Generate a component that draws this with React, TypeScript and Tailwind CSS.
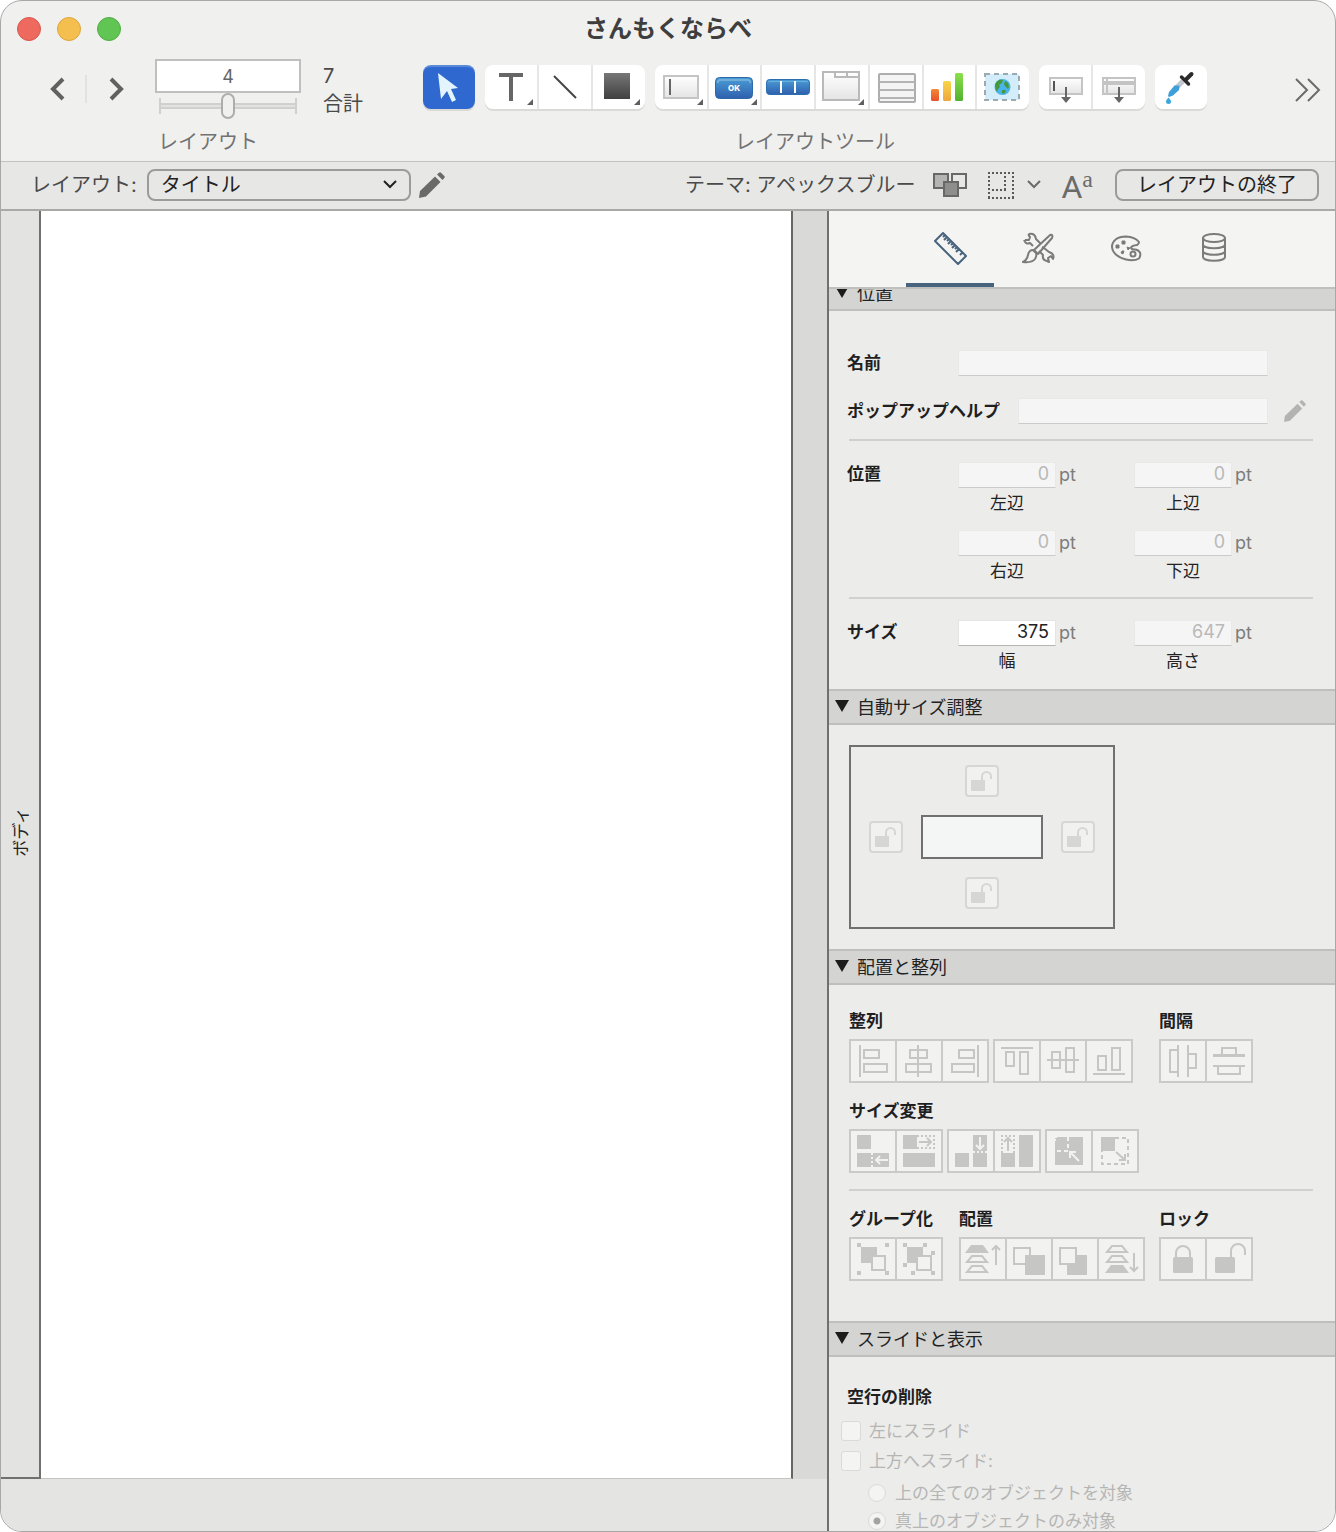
import type { ReactNode } from 'react';
import clsx from 'clsx';

/* ---------- toolbar ---------- */

function CornerMark({ x = 48 }: { x?: number }) {
  return <path d={`M${x} 34v6h-6z`} fill="#5f5f5f" />;
}

function ToolIcon({ children }: { children: ReactNode }) {
  return (
    <svg width="52" height="44" viewBox="0 0 52 44" fill="none" className="shrink-0">
      {children}
    </svg>
  );
}

function Pencil({ className }: { className: string }) {
  return (
    <svg viewBox="0 0 26 26" fill="currentColor" className={className}>
      <path d="M0 26l1-7L16 4.500 21.500 10 7 24.500z" />
      <path d="M18 2.500L20 .7q1-1 2 0l3.300 3.300q1 1 0 2L23.500 8z" />
    </svg>
  );
}

const fieldTool = (
  <ToolIcon>
    <rect x="9" y="11" width="34" height="22" fill="url(#paper)" stroke="#c4c4c4" strokeWidth="2" />
    <path d="M15 14v16" stroke="#666" strokeWidth="2" />
    <CornerMark />
  </ToolIcon>
);

const buttonTool = (
  <ToolIcon>
    <rect x="6.5" y="12.5" width="37" height="21" rx="4" fill="url(#blue)" stroke="#2d69a8" />
    <path d="M9 18v-1q0-2 2-2h28q2 0 2 2v1" stroke="#7fb5dc" strokeWidth="1.5" />
    <text x="25" y="26" textAnchor="middle" fontSize="8" fontWeight="800" fill="#fff">OK</text>
    <CornerMark />
  </ToolIcon>
);

const buttonBarTool = (
  <ToolIcon>
    <rect x="4.5" y="14.5" width="43" height="15" rx="3" fill="url(#blue)" stroke="#2c6fae" />
    <path d="M6 16.500h40" stroke="#6aaedb" />
    <path d="M19 16v12M33 16v12" stroke="#fff" strokeWidth="2" />
  </ToolIcon>
);

const tabTool = (
  <ToolIcon>
    <rect x="7" y="7" width="36" height="28" fill="url(#paper)" stroke="#b9b9b9" strokeWidth="2" />
    <path d="M19 7v5h24M31 7v5" stroke="#b9b9b9" strokeWidth="2" />
    <CornerMark />
  </ToolIcon>
);

const portalTool = (
  <ToolIcon>
    <rect x="9" y="9" width="36" height="28" rx="1" fill="#f4f4f4" stroke="#aeaeae" strokeWidth="2" />
    <path d="M9 17h36M9 25h36M9 33h36" stroke="#b4b4b4" strokeWidth="2" />
  </ToolIcon>
);

const chartTool = (
  <ToolIcon>
    <rect x="8" y="24" width="8" height="12" rx="1.500" fill="url(#barRed)" />
    <rect x="20" y="16" width="8" height="20" rx="1.500" fill="url(#barYellow)" />
    <rect x="32" y="8" width="8" height="28" rx="1.500" fill="url(#barGreen)" />
  </ToolIcon>
);

const webTool = (
  <ToolIcon>
    <rect x="8" y="9" width="34" height="26" fill="#d3edfb" stroke="#9aa9b2" strokeWidth="2" strokeDasharray="5 4" />
    <circle cx="25.500" cy="22" r="8" fill="#4bb4ea" />
    <path d="M18 20q1-4 5-5.500l3 .5-1 3-3 2 1 2-2 2-1 3q-2-3-2-7z" fill="#46993a" />
    <path d="M28 16l3 2 1 4-1 2-3-3-1-2zM25 25h3l1 1-2 3-2-1z" fill="#46993a" />
  </ToolIcon>
);

const insertFieldTool = (
  <ToolIcon>
    <rect x="11" y="13" width="32" height="16" fill="url(#paper)" stroke="#c4c4c4" strokeWidth="2" />
    <path d="M15 16v10" stroke="#555" strokeWidth="2" />
    <path d="M27 22v12" stroke="#666" strokeWidth="2" />
    <path d="M22 32h10l-5 6z" fill="#666" />
  </ToolIcon>
);

const insertPartTool = (
  <ToolIcon>
    <rect x="10" y="13" width="32" height="16" fill="url(#paper)" stroke="#c4c4c4" strokeWidth="2" />
    <path d="M10 18h32" stroke="#c4c4c4" strokeWidth="4" />
    <path d="M14 13v16" stroke="#c4c4c4" strokeWidth="2" />
    <path d="M26 22v12" stroke="#666" strokeWidth="2" />
    <path d="M21 32h10l-5 6z" fill="#666" />
  </ToolIcon>
);

const pointerTool = (
  <ToolIcon>
    <path d="M15 7l20 15-7 1 5 11-4 2-5-11-6 8z" fill="#e3f4fd" />
  </ToolIcon>
);

const textTool = (
  <ToolIcon>
    <path d="M14 8h24v4H28v24h-4V12H14z" fill="#666" />
    <CornerMark />
  </ToolIcon>
);

const lineTool = (
  <ToolIcon>
    <path d="M15 11l22 22" stroke="#444" strokeWidth="2" />
  </ToolIcon>
);

const shapeTool = (
  <ToolIcon>
    <rect x="11" y="8" width="26" height="26" fill="url(#dark)" />
    <CornerMark x={47} />
  </ToolIcon>
);

const dropperTool = (
  <ToolIcon>
    <path d="M28 16L20 24" stroke="#c3c7ce" strokeWidth="5" />
    <path d="M24.500 20.500h-5L14 27l-1 4 1 1 4-1.500 6-5.500z" fill="#3f9fd8" />
    <path d="M26.500 12l7 7" stroke="#2b2b2b" strokeWidth="3.500" strokeLinecap="round" />
    <path d="M31 14.500l5.500-5.500" stroke="#2b2b2b" strokeWidth="4" strokeLinecap="round" />
    <path d="M13.500 32.500q2.500 2.500 2.500 4a2.500 2.500 0 0 1-5 0q0-1.500 2.500-4z" fill="#3fa7dc" />
  </ToolIcon>
);

const toolGroups = [
  {
    width: 'w-[160px]',
    tools: [
      { label: 'テキスト', icon: textTool },
      { label: '線', icon: lineTool },
      { label: '図形', icon: shapeTool },
    ],
  },
  {
    width: 'w-[374px]',
    tools: [
      { label: 'フィールド', icon: fieldTool },
      { label: 'ボタン', icon: buttonTool },
      { label: 'ボタンバー', icon: buttonBarTool },
      { label: 'タブ', icon: tabTool },
      { label: 'ポータル', icon: portalTool },
      { label: 'グラフ', icon: chartTool },
      { label: 'Web ビューア', icon: webTool },
    ],
  },
  {
    width: 'w-[106px]',
    tools: [
      { label: 'フィールドを挿入', icon: insertFieldTool },
      { label: 'パートを挿入', icon: insertPartTool },
    ],
  },
  { width: 'w-[52px]', tools: [{ label: '書式のコピー', icon: dropperTool }] },
];

function IconGradients() {
  const stops = [
    ['paper', '#ffffff', '#e4e4e4'],
    ['blue', '#4a9ed6', '#2f5fae'],
    ['dark', '#777777', '#404040'],
    ['barRed', '#f28a34', '#e8502a'],
    ['barYellow', '#f8d648', '#f0a63c'],
    ['barGreen', '#8be04a', '#52b130'],
  ];
  return (
    <svg width="0" height="0" className="absolute" aria-hidden="true">
      <defs>
        {stops.map(([id, from, to]) => (
          <linearGradient key={id} id={id} x1="0" y1="0" x2="0" y2="1">
            <stop stopColor={from} />
            <stop offset="1" stopColor={to} />
          </linearGradient>
        ))}
      </defs>
    </svg>
  );
}

function Toolbar() {
  return (
    <div className="flex h-[105px] shrink-0 items-start pl-11 pr-3.5">
      <div className="flex h-[66px] items-center">
        <button aria-label="前へ" className="flex w-6 justify-center">
          <svg width="16" height="24" viewBox="0 0 16 24" fill="none" stroke="#616161" strokeWidth="4">
            <path d="M14 2L4 12l10 10" />
          </svg>
        </button>
        <span className="mx-4 h-7 w-0.5 bg-[#e2e2e1]" />
        <button aria-label="次へ" className="flex w-7 justify-center">
          <svg width="16" height="24" viewBox="0 0 16 24" fill="none" stroke="#616161" strokeWidth="4">
            <path d="M2 2l10 10L2 22" />
          </svg>
        </button>
      </div>

      <div className="ml-6 flex w-[146px] flex-col pt-[3px]">
        <input
          aria-label="レイアウト番号"
          defaultValue="4"
          className="h-[34px] w-full border-2 border-[#bfbfbe] bg-white text-center text-lg text-[#666] outline-none"
        />
        <div className="mx-1 grid items-center">
          <div className="col-start-1 row-start-1 flex h-4 items-center border-x-2 border-[#d0d0cf]">
            <div className="h-1.5 w-full border-y-2 border-[#d0d0cf] bg-[#e2e2e1]" />
          </div>
          <input
            type="range"
            aria-label="レイアウト"
            min={1}
            max={7}
            defaultValue={4}
            className="col-start-1 row-start-1 h-[26px] w-full appearance-none bg-transparent [&::-webkit-slider-thumb]:h-[26px] [&::-webkit-slider-thumb]:w-[14px] [&::-webkit-slider-thumb]:appearance-none [&::-webkit-slider-thumb]:rounded-full [&::-webkit-slider-thumb]:border-2 [&::-webkit-slider-thumb]:border-[#adadac] [&::-webkit-slider-thumb]:bg-[#f0f0ef]"
          />
        </div>
        <span className="mt-[9px] self-center pr-10 text-xl leading-7 text-[#737373]">レイアウト</span>
      </div>

      <div className="ml-[22px] flex w-[100px] flex-col pt-1.5 text-xl leading-7 text-[#4a4a4a]">
        <span>7</span>
        <span>合計</span>
      </div>

      <div className="flex flex-col items-center pt-[9px]">
        <div className="flex gap-2.5">
          <button
            aria-label="選択"
            className="flex h-11 w-[52px] items-center justify-center overflow-hidden rounded-lg border-t-2 border-[#5a8bd8] bg-[#2f68cf] shadow-[0_2px_0_#d9d9d8]"
          >
            {pointerTool}
          </button>
          {toolGroups.map((group) => (
            <div
              key={group.width}
              className={clsx('flex h-11 gap-0.5 overflow-hidden rounded-lg bg-[#e6e6e5] shadow-[0_2px_0_#dadad9]', group.width)}
            >
              {group.tools.map((tool) => (
                <button key={tool.label} aria-label={tool.label} className="flex min-w-0 flex-1 justify-center bg-white">
                  {tool.icon}
                </button>
              ))}
            </div>
          ))}
        </div>
        <span className="mt-[19px] text-xl leading-7 text-[#737373]">レイアウトツール</span>
      </div>

      <button aria-label="その他" className="ml-auto mt-[21px]">
        <svg width="26" height="26" viewBox="0 0 26 26" fill="none" stroke="#6b6b6b" strokeWidth="2">
          <path d="M1 2l11 11L1 24M13 2l11 11-11 11" />
        </svg>
      </button>
    </div>
  );
}

/* ---------- status bar ---------- */

function LayoutBar() {
  return (
    <div className="flex h-[49px] shrink-0 items-center border-b-2 border-[#a9a9a8] bg-[#e7e7e6] pb-0.5 pl-[30px] pr-4 text-xl text-[#4a4a4a]">
      <label htmlFor="layout" className="whitespace-nowrap">レイアウト:</label>
      <div className="ml-2.5 grid items-center">
        <select
          id="layout"
          className="col-start-1 row-start-1 h-8 w-[264px] appearance-none rounded-lg border-2 border-[#9b9b9a] bg-transparent pl-3 text-xl leading-7 text-[#222]"
        >
          <option>タイトル</option>
        </select>
        <svg width="14" height="9" viewBox="0 0 14 9" fill="none" stroke="#222" strokeWidth="2" className="pointer-events-none col-start-1 row-start-1 mr-3.5 justify-self-end">
          <path d="M1 1l6 6 6-6" />
        </svg>
      </div>
      <button aria-label="レイアウトの編集" className="ml-2">
        <Pencil className="h-[26px] w-[26px] text-[#6a6a69]" />
      </button>

      <span className="ml-auto whitespace-nowrap">テーマ: アペックスブルー</span>
      <button aria-label="テーマの変更" className="ml-[18px]">
        <svg width="34" height="24" viewBox="0 0 34 24" fill="#b4b4b3" stroke="#686867" strokeWidth="2">
          <path d="M1 1h14v14H1z" />
          <path d="M19 1h14v14H19z" fill="#e7e7e6" />
          <path d="M11 9h14v14H11z" fill="#8e8e8d" />
        </svg>
      </button>
      <button aria-label="グリッド" className="ml-5 flex items-center gap-3">
        <svg width="28" height="28" viewBox="0 0 28 28" fill="none" stroke="#5a5a59" strokeWidth="2" strokeDasharray="2 2">
          <path d="M1 2h26M1 27h26M2 1v26M26 1v26M18 5v14M5 19h14" />
        </svg>
        <svg width="14" height="10" viewBox="0 0 14 10" fill="none" stroke="#6b6b6a" strokeWidth="2">
          <path d="M1 1l6 6 6-6" />
        </svg>
      </button>
      <button aria-label="書式設定バー" className="ml-5 flex items-start text-[#6b6b6a]">
        <span className="pt-1 font-['Roboto',sans-serif] text-[32px] leading-7">A</span>
        <span className="-mt-1 font-['Liberation_Serif',serif] text-2xl leading-7">a</span>
      </button>
      <button className="ml-[22px] h-8 w-[204px] rounded-lg border-2 border-[#9b9b9a] leading-7 text-[#222]">
        レイアウトの終了
      </button>
    </div>
  );
}

/* ---------- inspector ---------- */

const tabs = [
  {
    label: '位置',
    active: true,
    icon: (
      <path d="M2 10l8-8 23 23-8 8zM14 6l-3 3M18 10l-3 3M22 14l-3 3M26 18l-3 3M29 22l-2 2M12 4l-2 2M16 8l-2 2M20 12l-2 2M24 16l-2 2" />
    ),
  },
  {
    label: 'スタイル',
    icon: (
      <>
        <path d="M3 9q2 5 6 3l3 3M18 20l4 4q-1 5 4 6l2 1-1-4 3-2 2 3q2-5-4-7l-5-4-2-1M8 3q-1 1 1 3l-1 3-4 0M8 3q6-1 7 5l5 5" />
        <path d="M31 4q1 1 0 3L17 23l-4-4L28 5q2-2 3-1z" />
        <path d="M12 19q-4 0-5 5-1 5-5 7 9 1 12-3 2-3 1-6z" />
      </>
    ),
  },
  {
    label: '外観',
    icon: (
      <>
        <path d="M30 11q-4-5-13-5.500C8 5.500 3 10 3 16q1 9 14 12.500 8 2 13-1 2-3 1-6-2-3-5-3-4 0-4-2 1-2 6-2.500 2-1 2-3z" />
        <circle cx="24" cy="23" r="2.500" />
        <path d="M13 10h3v3h-3zM7 14h3v3H7zM18 16l3 1-2 2zM13 20h2l-1 3-2-1z" fill="#7b7b7a" strokeWidth="1" />
      </>
    ),
  },
  {
    label: 'データ',
    icon: (
      <>
        <ellipse cx="17" cy="7" rx="11" ry="4" />
        <path d="M6 7v19c0 5 22 5 22 0V7M6 13.500c0 5 22 5 22 0M6 20c0 5 22 5 22 0" />
      </>
    ),
  },
];

function Section({ title, children }: { title: string; children: ReactNode }) {
  return (
    <section>
      <h2 className="border-y-2 border-[#bfbfbe] bg-[#d4d4d3]">
        <button className="flex h-8 w-full items-center gap-2 pl-1.5 text-lg text-[#222]">
          <svg width="14" height="12" viewBox="0 0 14 12" className="mb-0.5">
            <path d="M0 0h14L7 12z" fill="#1c1c1c" />
          </svg>
          <span className="pt-0.5 leading-[30px]">{title}</span>
        </button>
      </h2>
      {children}
    </section>
  );
}

function Divider() {
  return <hr className="ml-0.5 mr-[22px] border-t-2 border-[#d0d0cf]" />;
}

const inputClass =
  'h-[26px] min-w-0 border border-[#e4e4e3] border-b-[#b5b5b4] bg-white text-[#222] disabled:border-[#e9e9e8] disabled:border-b-[#cbcbca] disabled:bg-[#f5f5f5] disabled:text-[#b9b9b8]';

interface MeasureProps {
  id: string;
  label: string;
  value: string;
  disabled?: boolean;
}

function Measure({ id, label, value, disabled = true }: MeasureProps) {
  return (
    <div className="w-[176px]">
      <div className="flex items-center gap-[3px]">
        <input
          id={id}
          defaultValue={value}
          disabled={disabled}
          className={clsx(inputClass, 'w-[98px] pb-1 pr-1.5 text-right text-lg leading-5')}
        />
        <span className="text-lg leading-6 text-[#7d7d7c]">pt</span>
      </div>
      <label htmlFor={id} className="mt-[3px] block w-[98px] text-center leading-6 text-[#222]">
        {label}
      </label>
    </div>
  );
}

const LABEL = 'w-[111px] shrink-0 font-bold leading-6 text-[#1f1f1f]';

function PositionSection() {
  return (
    <Section title="位置">
      <div className="pb-4 pl-[18px] pt-[39px]">
        <div className="flex items-center">
          <label htmlFor="name" className={LABEL}>名前</label>
          <input id="name" disabled className={clsx(inputClass, 'mr-[67px] flex-1')} />
        </div>
        <div className="mb-[15px] mt-[22px] flex items-center">
          <label htmlFor="help" className="w-[171px] shrink-0 font-bold leading-6 text-[#1f1f1f]">ポップアップヘルプ</label>
          <input id="help" disabled className={clsx(inputClass, 'flex-1')} />
          <button disabled aria-label="計算式の指定" className="ml-4 mr-[29px]">
            <Pencil className="h-[22px] w-[22px] text-[#b3b3b2]" />
          </button>
        </div>
        <Divider />
        <div className="mb-3.5 mt-[21px] flex">
          <span className={LABEL}>位置</span>
          <div className="grid grid-cols-[176px_1fr] gap-y-[15px]">
            <Measure id="left" label="左辺" value="0" />
            <Measure id="top" label="上辺" value="0" />
            <Measure id="right" label="右辺" value="0" />
            <Measure id="bottom" label="下辺" value="0" />
          </div>
        </div>
        <Divider />
        <div className="mt-[21px] flex">
          <span className={LABEL}>サイズ</span>
          <Measure id="width" label="幅" value="375" disabled={false} />
          <Measure id="height" label="高さ" value="647" />
        </div>
      </div>
    </Section>
  );
}

function AnchorButton({ label, className }: { label: string; className?: string }) {
  return (
    <button
      disabled
      aria-label={label}
      className={clsx('flex h-8 w-[34px] rounded border-2 border-[#d6d6d5] bg-[#f1f1f0]', className)}
    >
      <svg width="30" height="28" viewBox="0 0 30 28" fill="none">
        <path d="M4 13h14v11H4z" fill="#d6d6d5" />
        <path d="M15 13V9.500a4.500 4.500 0 0 1 9 0V12" stroke="#d6d6d5" strokeWidth="2" />
      </svg>
    </button>
  );
}

function AutosizeSection() {
  return (
    <Section title="自動サイズ調整">
      <div className="py-5 pl-5">
        <div className="grid w-fit grid-cols-[34px_122px_34px] items-center gap-[18px] border-2 border-[#6f706f] p-[18px]">
          <AnchorButton label="上" className="col-start-2 justify-self-center" />
          <AnchorButton label="左" className="col-start-1" />
          <div className="h-11 border-2 border-[#6f706f] bg-[#f4f5f5]" />
          <AnchorButton label="右" />
          <AnchorButton label="下" className="col-start-2 justify-self-center" />
        </div>
      </div>
    </Section>
  );
}

const G = '#c6c6c5';
const BG = '#f2f2f1';

const icons = {
  alignLeft: <path d="M9 4v32M13 9h15v8H13zM13 23h23v8H13z" />,
  alignCenter: <path d="M21 4v32M13 9h17v8H13zM9 23h25v8H9z" />,
  alignRight: <path d="M35 4v32M16 9h15v8H16zM9 23h22v8H9z" />,
  alignTop: <path d="M6 7h32M11 11h8v14h-8zM25 11h8v22h-8z" />,
  alignMiddle: <path d="M6 19h32M11 11h8v16h-8zM25 7h8v24h-8z" />,
  alignBottom: <path d="M6 33h32M11 15h8v14h-8zM25 7h8v22h-8z" />,
  spaceHorizontal: <path d="M17 4v32M17 9H9v22h8M27 4v32M27 13h8v14h-8" />,
  spaceVertical: (
    <>
      <path d="M15 14V7h14v7M6 25h32M11 25v8h22v-8" />
      <path d="M6 14.500h32" strokeWidth="3" />
    </>
  ),
  narrow: (
    <>
      <path d="M6 4h14v14H6zM6 22h32v14H6z" fill={G} stroke="none" />
      <path d="M21 22v14" stroke={BG} strokeDasharray="2 2" />
      <path d="M37 29H25M29 25l-4 4 4 4" stroke={BG} />
    </>
  ),
  widen: (
    <>
      <path d="M6 4h14v14H6zM6 22h32v14H6z" fill={G} stroke="none" />
      <path d="M20 5h18M20 17h18M37 4v14" strokeDasharray="2 2" />
      <path d="M22 11h12M30 7l4 4-4 4" />
    </>
  ),
  shorten: (
    <>
      <path d="M6 22h14v14H6zM24 4h14v32H24z" fill={G} stroke="none" />
      <path d="M24 21h14" stroke={BG} strokeDasharray="2 2" />
      <path d="M31 6v12M27 14l4 4 4-4" stroke={BG} />
    </>
  ),
  heighten: (
    <>
      <path d="M6 22h14v14H6zM24 4h14v32H24z" fill={G} stroke="none" />
      <path d="M6 5h14M7 4v18M19 4v18" strokeDasharray="2 2" />
      <path d="M13 20V7M9 11l4-4 4 4" />
    </>
  ),
  shrink: (
    <>
      <path d="M8 6h28v28H8z" fill={G} stroke="none" />
      <path d="M21 6v14H8" stroke={BG} strokeDasharray="4 3" />
      <path d="M8 10V6h4" stroke={BG} strokeDasharray="2 2" />
      <path d="M32 30l-9-9M23 27v-6h6" stroke={BG} />
    </>
  ),
  grow: (
    <>
      <path d="M8 6h14v14H8z" fill={G} stroke="none" />
      <path d="M22 7h13v26H9V20" strokeDasharray="4 3" />
      <path d="M23 21l9 8M32 23v6h-6" />
    </>
  ),
  group: (
    <>
      <path d="M6 4h4v4H6zM34 4h4v4h-4zM6 32h4v4H6zM34 32h4v4h-4zM10 8h16v16H10z" fill={G} stroke="none" />
      <path d="M21 17h13v14H21z" fill={BG} />
    </>
  ),
  ungroup: (
    <>
      <path d="M6 4h4v4H6zM26 4h4v4h-4zM34 12h4v4h-4zM6 24h4v4H6zM14 32h4v4h-4zM34 32h4v4h-4zM10 8h16v16H10z" fill={G} stroke="none" />
      <path d="M20 17h14v14H20z" fill={BG} />
    </>
  ),
  bringToFront: (
    <>
      <path d="M10 6h12l6 8H4z" fill={G} stroke="none" />
      <path d="M11 17h10l5 6H6zM11 27h10l5 6H6zM35 26V7M31 11l4-4 4 4" />
    </>
  ),
  bringForward: (
    <>
      <path d="M7 9h16v16H7z" />
      <path d="M18 16h20v20H18z" fill={G} stroke="none" />
    </>
  ),
  sendBackward: (
    <>
      <path d="M14 16h20v20H14z" fill={G} stroke="none" />
      <path d="M7 9h16v16H7z" fill={BG} />
    </>
  ),
  sendToBack: (
    <>
      <path d="M13 7h10l5 6H8zM13 17h10l5 6H8zM35 14v18M31 28l4 4 4-4" />
      <path d="M12 26h12l6 8H6z" fill={G} stroke="none" />
    </>
  ),
  lock: (
    <>
      <rect x="12" y="18" width="20" height="16" rx="1.500" fill={G} stroke="none" />
      <path d="M15 18v-4a7 7 0 0 1 14 0v4" />
    </>
  ),
  unlock: (
    <>
      <rect x="8" y="18" width="20" height="16" rx="1.500" fill={G} stroke="none" />
      <path d="M24 18v-6a7 7 0 0 1 14 0v4" />
    </>
  ),
};

type IconName = keyof typeof icons;

function ButtonGroup({ names }: { names: IconName[] }) {
  return (
    <div className="flex gap-0.5 bg-[#cacac9] p-0.5">
      {names.map((name) => (
        <button key={name} disabled aria-label={name} className="bg-[#f2f2f1]">
          <svg width="44" height="40" viewBox="0 0 44 40" fill="none" stroke={G} strokeWidth="2">
            {icons[name]}
          </svg>
        </button>
      ))}
    </div>
  );
}

function Tools({ title, groups, className }: { title: string; groups: IconName[][]; className?: string }) {
  return (
    <div className={className}>
      <h3 className="mb-1.5 whitespace-nowrap font-bold leading-6 text-[#1f1f1f]">{title}</h3>
      <div className="flex gap-1">
        {groups.map((names) => (
          <ButtonGroup key={names[0]} names={names} />
        ))}
      </div>
    </div>
  );
}

function ArrangeSection() {
  return (
    <Section title="配置と整列">
      <div className="flex flex-col gap-4 pb-10 pl-[18px] pt-6">
        <div className="flex pl-0.5">
          <Tools
            title="整列"
            className="w-[310px]"
            groups={[
              ['alignLeft', 'alignCenter', 'alignRight'],
              ['alignTop', 'alignMiddle', 'alignBottom'],
            ]}
          />
          <Tools title="間隔" groups={[['spaceHorizontal', 'spaceVertical']]} />
        </div>
        <Tools title="サイズ変更" className="pl-0.5" groups={[['narrow', 'widen'], ['shorten', 'heighten'], ['shrink', 'grow']]} />
        <Divider />
        <div className="flex pl-0.5">
          <Tools title="グループ化" className="w-[110px]" groups={[['group', 'ungroup']]} />
          <Tools
            title="配置"
            className="w-[200px]"
            groups={[['bringToFront', 'bringForward', 'sendBackward', 'sendToBack']]}
          />
          <Tools title="ロック" groups={[['lock', 'unlock']]} />
        </div>
      </div>
    </Section>
  );
}

function Check({ label }: { label: string }) {
  return (
    <label className="flex items-center gap-2 leading-6">
      <input type="checkbox" disabled className="h-5 w-5 appearance-none rounded-[3px] border border-[#dadad9] bg-[#f4f4f3]" />
      {label}
    </label>
  );
}

function Radio({ label, checked = false }: { label: string; checked?: boolean }) {
  return (
    <label className="flex items-center gap-[9px] leading-6">
      <input
        type="radio"
        name="slide-up"
        disabled
        defaultChecked={checked}
        className="h-[18px] w-[18px] appearance-none rounded-full border border-[#dadad9] bg-[#f4f4f3] checked:bg-[radial-gradient(circle,#a3a3a2_3px,#f4f4f3_4px)]"
      />
      {label}
    </label>
  );
}

function SlideSection() {
  return (
    <Section title="スライドと表示">
      <div className="pl-3 pt-7 text-[#b5b5b4]">
        <h3 className="mb-2.5 pl-1.5 font-bold leading-6 text-[#1f1f1f]">空行の削除</h3>
        <div className="flex flex-col gap-1.5">
          <Check label="左にスライド" />
          <Check label="上方へスライド:" />
        </div>
        <div className="mt-2 flex flex-col gap-1 pl-[27px]">
          <Radio label="上の全てのオブジェクトを対象" />
          <Radio label="真上のオブジェクトのみ対象" checked />
        </div>
      </div>
    </Section>
  );
}

function Inspector() {
  return (
    <aside className="flex w-[508px] shrink-0 flex-col border-l-2 border-[#707070] bg-[#ececeb] text-[17px]">
      <nav className="relative z-10 flex shrink-0 justify-center border-b-2 border-[#bfbfbe] bg-[#f4f4f3]">
        {tabs.map((tab) => (
          <button
            key={tab.label}
            aria-label={tab.label}
            className={clsx(
              'flex h-[76px] w-[88px] items-center justify-center border-b-4 pt-0.5',
              tab.active ? 'border-[#48637d] text-[#48637d]' : 'border-transparent text-[#7b7b7a]',
            )}
          >
            <svg width="34" height="34" viewBox="0 0 34 34" fill="none" stroke="currentColor" strokeWidth="2" strokeLinejoin="round">
              {tab.icon}
            </svg>
          </button>
        ))}
      </nav>
      <div className="min-h-0 flex-1 overflow-hidden">
        {/* scrolled slightly, so the first header sits partly under the tabs */}
        <div className="-mt-[14px]">
          <PositionSection />
          <AutosizeSection />
          <ArrangeSection />
          <SlideSection />
        </div>
      </div>
    </aside>
  );
}

/* ---------- window ---------- */

export default function App() {
  return (
    <div className="flex h-screen flex-col overflow-hidden rounded-[22px] border border-[#a8a8a8] bg-[#f0f0ef] font-['Inter','Noto_Sans_CJK_JP',sans-serif]">
      <IconGradients />
      <header className="grid h-[55px] shrink-0 grid-cols-[1fr_auto_1fr] items-center px-4">
        <div className="flex gap-4">
          <button aria-label="閉じる" className="h-6 w-6 rounded-full border border-[#d9574d] bg-[#ee6a5f]" />
          <button aria-label="しまう" className="h-6 w-6 rounded-full border border-[#dba63c] bg-[#f5bf4f]" />
          <button aria-label="拡大" className="h-6 w-6 rounded-full border border-[#4fae42] bg-[#61c554]" />
        </div>
        <h1 className="text-2xl font-bold leading-8 text-[#3e3e3e]">さんもくならべ</h1>
      </header>
      <Toolbar />
      <div className="h-px shrink-0 bg-[#c2c2c0]" />
      <LayoutBar />

      <div className="flex min-h-0 flex-1">
        <main className="flex min-w-0 flex-1 flex-col bg-[#e4e4e3]">
          <div className="flex flex-1">
            <div className="flex w-10 items-center justify-center border-b-2 border-r-2 border-[#707070] bg-[#e3e3e2] pb-6 pl-1">
              <span className="rotate-180 text-[17px] text-[#222] [text-orientation:sideways] [writing-mode:vertical-rl]">ボディ</span>
            </div>
            <div className="flex-1 border-b border-r-2 border-b-[#c4c4c3] border-r-[#666] bg-white" />
            <div className="w-[34px] bg-[#d9d9d8]" />
          </div>
          <div className="h-[52px]" />
        </main>
        <Inspector />
      </div>
    </div>
  );
}
